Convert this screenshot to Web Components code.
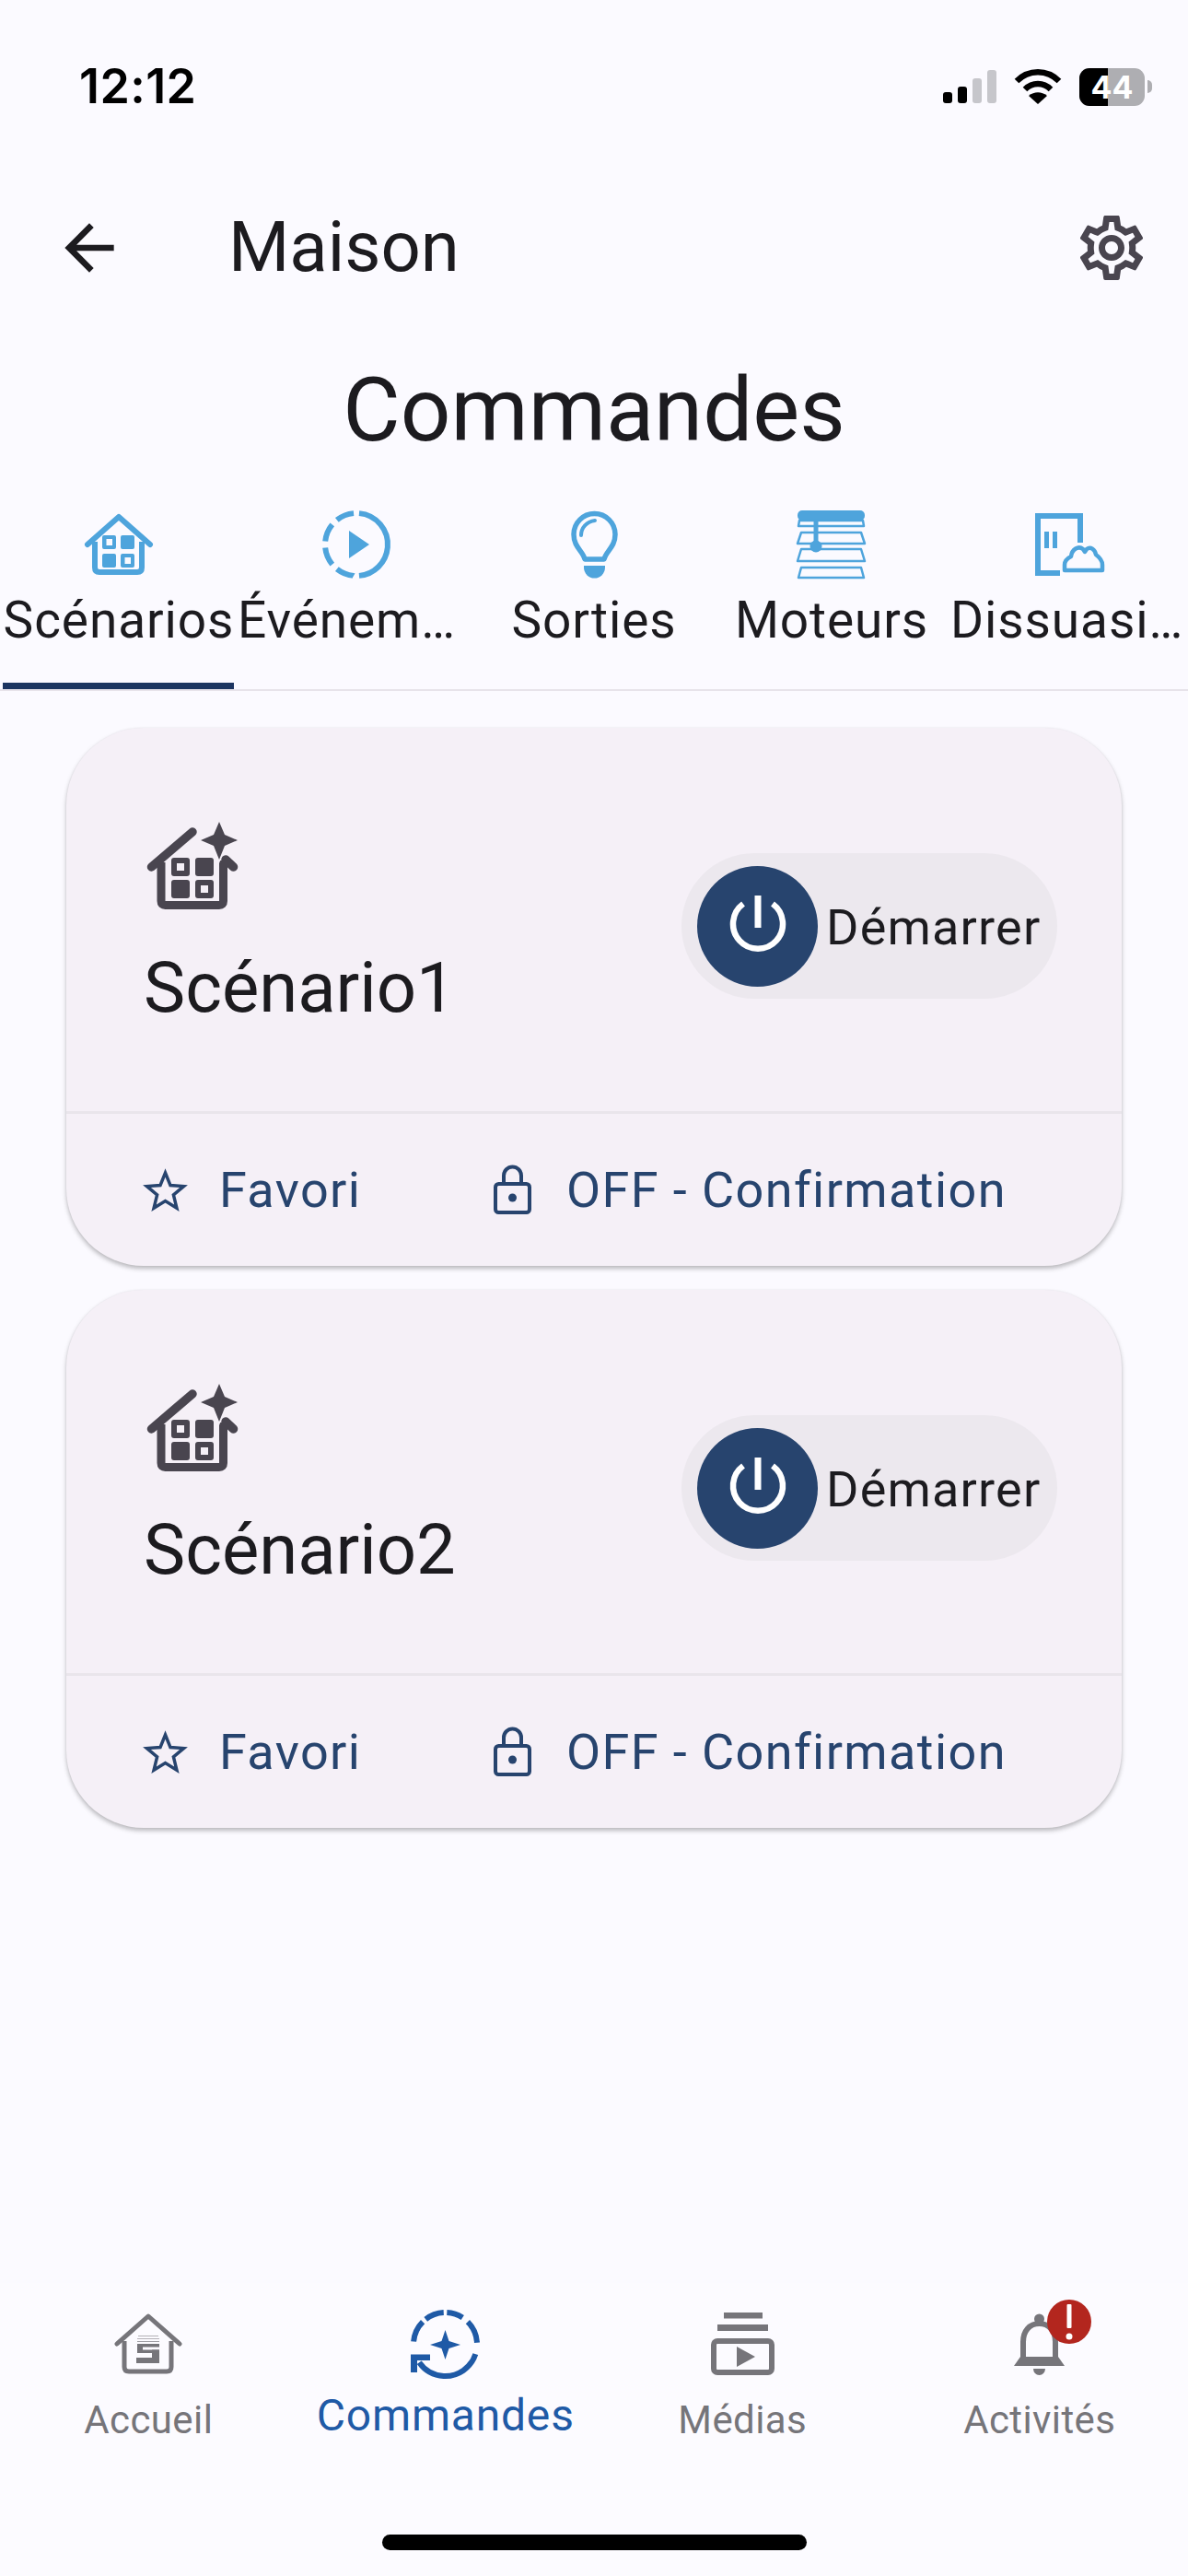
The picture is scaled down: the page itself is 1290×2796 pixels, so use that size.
<!DOCTYPE html>
<html lang="fr">
<head>
<meta charset="utf-8">
<title>Maison</title>
<style>
  html, body { margin: 0; padding: 0; }
  body { background: #fbfaff; font-family: Roboto, "Liberation Sans", sans-serif; color: #1c1b1f; }
</style>
</head>
<body>
<app-screen></app-screen>

<script>
// every icon is drawn on its own pixel box, taken from the 1290 wide reference
const ICONS = {
  signal: [58, 36, `
    <rect x="0" y="24" width="10" height="12" rx="3" fill="#000"/>
    <rect x="16" y="18" width="10" height="18" rx="3" fill="#000"/>
    <rect x="32" y="9" width="10" height="27" rx="3" fill="#c6c6cb"/>
    <rect x="48" y="0" width="10" height="36" rx="3" fill="#c6c6cb"/>`],
  wifi: [52, 37, `
    <path d="M3 12C16-1 36-1 49 12" fill="none" stroke="#000" stroke-width="6.500"/>
    <path d="M12 21C20 13 32 13 40 21" fill="none" stroke="#000" stroke-width="6.500"/>
    <path d="M16 28C22 23 30 23 36 28L26 37Z" fill="#000"/>`],
  back: [80, 80, `<path fill="currentColor" transform="scale(3.333)" d="M20 11H7.830l5.590-5.590L12 4l-8 8 8 8 1.410-1.410L7.830 13H20v-2z"/>`],
  gear: [84, 84, `<path fill="currentColor" transform="scale(3.500)" d="M19.430 12.980c.04-.32.07-.64.07-.98 0-.34-.03-.66-.07-.98l2.110-1.650c.19-.15.24-.42.12-.64l-2-3.460c-.09-.16-.26-.25-.44-.25-.06 0-.12.01-.17.03l-2.490 1c-.52-.4-1.080-.73-1.690-.98l-.38-2.650C14.460 2.180 14.250 2 14 2h-4c-.25 0-.46.18-.49.42l-.38 2.650c-.61.25-1.170.59-1.690.98l-2.490-1c-.06-.02-.12-.03-.18-.03-.17 0-.34.09-.43.25l-2 3.460c-.13.22-.07.49.12.64l2.110 1.650c-.04.32-.07.65-.07.98 0 .33.03.66.07.98l-2.110 1.650c-.19.15-.24.42-.12.64l2 3.460c.09.16.26.25.44.25.06 0 .12-.01.17-.03l2.490-1c.52.4 1.080.73 1.690.98l.38 2.650c.03.24.24.42.49.42h4c.25 0 .46-.18.49-.42l.38-2.650c.61-.25 1.170-.59 1.690-.98l2.490 1c.06.02.12.03.18.03.17 0 .34-.09.43-.25l2-3.460c.12-.22.07-.49-.12-.64l-2.110-1.650zm-1.980-1.710c.04.31.05.52.05.73 0 .21-.02.43-.05.73l-.14 1.130.89.7 1.080.84-.7 1.210-1.270-.51-1.040-.42-.9.68c-.43.32-.84.56-1.250.73l-1.060.43-.16 1.130-.2 1.350h-1.400l-.19-1.350-.16-1.130-1.060-.43c-.43-.18-.83-.41-1.230-.71l-.91-.7-1.060.43-1.270.51-.7-1.210 1.080-.84.89-.7-.14-1.130c-.03-.31-.05-.54-.05-.74s.02-.43.05-.73l.14-1.130-.89-.7-1.080-.84.7-1.210 1.270.51 1.040.42.9-.68c.43-.32.84-.56 1.250-.73l1.060-.43.16-1.130.2-1.350h1.390l.19 1.350.16 1.130 1.060.43c.43.18.83.41 1.230.71l.91.7 1.060-.43 1.270-.51.7 1.210-1.070.85-.89.7.14 1.130zM12 8c-2.210 0-4 1.790-4 4s1.790 4 4 4 4-1.790 4-4-1.790-4-4-4zm0 6c-1.100 0-2-.9-2-2s.9-2 2-2 2 .9 2 2-.9 2-2 2z"/>`],
  house: [74, 66, `
    <path d="M3 33 37 3 71 33" fill="none" stroke="currentColor" stroke-width="6" stroke-linecap="round" stroke-linejoin="round"/>
    <path d="M11 30V58q0 5 5 5H57q5 0 5-5V30" fill="none" stroke="currentColor" stroke-width="6"/>
    <path fill-rule="evenodd" fill="currentColor" d="M21 23H32q2 0 2 2V36q0 2-2 2H21q-2 0-2-2V25q0-2 2-2ZM23.500 27V34H30V27Z"/>
    <rect x="39" y="23" width="15" height="15" rx="2" fill="currentColor"/>
    <rect x="19" y="43" width="15" height="15" rx="2" fill="currentColor"/>
    <path fill-rule="evenodd" fill="currentColor" d="M41 43H52q2 0 2 2V56q0 2-2 2H41q-2 0-2-2V45q0-2 2-2ZM43.500 47V54H50V47Z"/>`],
  event: [74, 74, `
    <circle cx="37" cy="37" r="34" fill="none" stroke="currentColor" stroke-width="6" pathLength="360"
      stroke-dasharray="170 10 33.500 12 33.500 12 33.500 12 33.500 10" transform="rotate(-85 37 37)"/>
    <path d="M29 22 51 37 29 52Z" fill="currentColor"/>`],
  bulb: [51, 74, `
    <path d="M15 53C13 44 3 40 3 26A22.500 22.500 0 0 1 48 26C48 40 38 44 36 53Z" fill="none" stroke="currentColor" stroke-width="5.500" stroke-linejoin="round"/>
    <path d="M11 27C11 19 17 12 26 11" fill="none" stroke="currentColor" stroke-width="4" stroke-linecap="round"/>
    <path d="M14 60H37V62A11.500 11.500 0 0 1 14 62Z" fill="currentColor"/>`],
  blinds: [74, 74, `
    <rect x="0" y="0" width="73" height="11" rx="5" fill="currentColor"/>
    <g fill="none" stroke="currentColor" stroke-width="2.500" stroke-linejoin="round">
      <path d="M2 11H71L72 17H1Z"/>
      <path d="M4 24H69L73 36H0Z"/>
      <path d="M4 42H69L73 55H0Z"/>
      <path d="M4 62H69L72 73H1Z"/>
    </g>
    <path d="M20 10V39" stroke="currentColor" stroke-width="5"/>
    <circle cx="20" cy="39" r="6.500" fill="currentColor"/>`],
  shield: [75, 69, `
    <path d="M49 32V3H3V65H27" fill="none" stroke="currentColor" stroke-width="6"/>
    <rect x="10" y="20" width="5" height="18" fill="currentColor"/>
    <rect x="19" y="20" width="5" height="18" fill="currentColor"/>
    <path d="M32 62V56C32 52 35 49 39 47C40 39 47 35 52 39L54 42L56 39C60 36 65 39 66 45C70 48 73 52 73 56V62Z" fill="none" stroke="currentColor" stroke-width="4.500" stroke-linejoin="round"/>`],
  scene: [98, 96, `
    <path d="M4.500 49 49 11" fill="none" stroke="currentColor" stroke-width="9.500" stroke-linecap="round"/>
    <path d="M85 41 93.500 49" fill="none" stroke="currentColor" stroke-width="9.500" stroke-linecap="round"/>
    <path d="M15 44V86q0 4.500 4.500 4.500H78q4.500 0 4.500-4.500V42" fill="none" stroke="currentColor" stroke-width="9"/>
    <path fill-rule="evenodd" fill="currentColor" d="M29 39H43q3 0 3 3V56q0 3-3 3H29q-3 0-3-3V42q0-3 3-3ZM32 45V53H40V45Z"/>
    <rect x="52" y="39" width="20" height="20" rx="3" fill="currentColor"/>
    <rect x="26" y="63" width="20" height="20" rx="3" fill="currentColor"/>
    <path fill-rule="evenodd" fill="currentColor" d="M55 63H69q3 0 3 3V80q0 3-3 3H55q-3 0-3-3V66q0-3 3-3ZM58 69V77H66V69Z"/>
    <path d="M78 0 84 14 98 20 84 26 78 41 72 26 58 20 72 14Z" fill="currentColor" stroke="#f5f0f7" stroke-width="3" paint-order="stroke"/>`],
  star: [49, 46, `<path d="M24.500 4 30 17.600 44.500 18.600 33.400 28 36.900 42.200 24.500 34.500 12.100 42.200 15.600 28 4.500 18.600 19 17.600Z" fill="none" stroke="currentColor" stroke-width="3.500" stroke-linejoin="miter"/>`],
  lock: [41, 53, `
    <rect x="2" y="20" width="37" height="31" rx="3.500" fill="none" stroke="currentColor" stroke-width="4"/>
    <path d="M11 20V11a9.500 9.500 0 0 1 19 0V20" fill="none" stroke="currentColor" stroke-width="4"/>
    <circle cx="20.500" cy="35" r="4.500" fill="currentColor"/>`],
  power: [62, 66, `
    <path d="M15 9A27 27 0 1 0 47 9" fill="none" stroke="#fff" stroke-width="6.500"/>
    <rect x="27.500" y="0" width="7" height="35" fill="#fff"/>`],
  home: [74, 66, `
    <path d="M3 33 37 3 71 33" fill="none" stroke="currentColor" stroke-width="5" stroke-linecap="round" stroke-linejoin="round"/>
    <path d="M11 30V58q0 5 5 5H57q5 0 5-5V30" fill="none" stroke="currentColor" stroke-width="5"/>
    <g fill="currentColor">
      <rect x="26" y="24" width="22" height="1" opacity=".55"/>
      <rect x="25" y="27" width="24" height="1" opacity=".55"/>
      <rect x="25" y="30" width="24" height="1" opacity=".7"/>
      <rect x="25" y="33" width="24" height="3.500"/>
      <rect x="25" y="33" width="6" height="10"/>
      <rect x="25" y="39.500" width="24" height="3.500"/>
      <rect x="41" y="39.500" width="8" height="14.500"/>
      <rect x="24" y="48" width="25" height="6"/>
    </g>`],
  commands: [75, 75, `
    <circle cx="37.500" cy="37.500" r="34.500" fill="none" stroke="currentColor" stroke-width="6" pathLength="360"
      stroke-dasharray="30 12 42 21 127 40 40 7 35 6" transform="rotate(-87 37.500 37.500)"/>
    <path d="M37.500 22 41.500 34 54 38 41.500 42 37.500 54 33.500 42 21 38 33.500 34Z" fill="currentColor"/>
    <path d="M0 48.500H21V55H7V68H0Z" fill="currentColor"/>`],
  media: [69, 68, `
    <rect x="14" y="0" width="42" height="6.500" fill="currentColor"/>
    <rect x="7" y="13" width="55" height="7" fill="currentColor"/>
    <rect x="3" y="31" width="63" height="34" rx="4" fill="none" stroke="currentColor" stroke-width="6"/>
    <path d="M28 37 48 48 28 59Z" fill="currentColor"/>`],
  bell: [55, 67, `
    <circle cx="27.500" cy="6" r="5.500" fill="currentColor"/>
    <path d="M10 50V31C10 19 17 11 27.500 11C38 11 45 19 45 31V50" fill="none" stroke="currentColor" stroke-width="6"/>
    <path d="M0 57 7 47H48L55 57Z" fill="currentColor"/>
    <path d="M21 60H34A6.500 7 0 0 1 21 60Z" fill="currentColor"/>`],
  alert: [48, 48, `
    <rect x="21.500" y="5" width="5" height="26" rx="1" fill="#fff"/>
    <circle cx="24" cy="40" r="3.500" fill="#fff"/>`]
};

class AppElement extends HTMLElement {
  get html() { return ``; }
  get css() { return ``; }

  connectedCallback() {
    if (this.shadowRoot) return;
    this.attachShadow({ mode: 'open' });
    this.shadowRoot.innerHTML = `<style>${this.css}</style>${this.html}`;
  }

  static define(name) {
    customElements.define(name, this);
  }
}

class AppIcon extends AppElement {
  get css() { return `:host { display: block; line-height: 0; } svg { display: block; overflow: visible; }`; }
  get html() {
    const [w, h, body] = ICONS[this.getAttribute('name')];
    return `<svg xmlns="http://www.w3.org/2000/svg" width="${w}" height="${h}" viewBox="0 0 ${w} ${h}">${body}</svg>`;
  }
}

class StatusBar extends AppElement {
  get css() {
    return `
      :host { display: flex; align-items: center; height: 188px; padding: 0 39px 0 86px; box-sizing: border-box; }
      .time { font: 600 52px/60px Inter, "Liberation Sans", sans-serif; color: #000; letter-spacing: .4px; margin-right: auto; }
      .wifi { margin: 0 19px; }
      .battery { position: relative; display: flex; width: 71px; height: 41px; border-radius: 11px; overflow: hidden; background: #aeaeb2; }
      .level { width: 31px; background: #000; }
      .pct { position: absolute; inset: 0; text-align: center; font: 700 34px/41px Inter, "Liberation Sans", sans-serif; color: #fff; }
      .tip { width: 5px; height: 14px; margin-left: 3px; border-radius: 0 5px 5px 0; background: #aeaeb2; }
    `;
  }
  get html() {
    return `
      <span class="time">12:12</span>
      <app-icon name="signal"></app-icon>
      <app-icon class="wifi" name="wifi"></app-icon>
      <div class="battery"><div class="level"></div><span class="pct">44</span></div>
      <div class="tip"></div>
    `;
  }
}

class AppBar extends AppElement {
  get css() {
    return `
      :host { display: flex; align-items: center; height: 162px; padding: 0 41px 0 57px; box-sizing: border-box; }
      .back { color: #1c1b1f; }
      h1 { flex: 1; margin: 0 0 3px 111px; font: 400 76px/84px Roboto, sans-serif; color: #1c1b1f; }
      .gear { color: #49454f; }
    `;
  }
  get html() {
    return `
      <app-icon class="back" name="back"></app-icon>
      <h1><slot></slot></h1>
      <app-icon class="gear" name="gear"></app-icon>
    `;
  }
}

class PageTitle extends AppElement {
  get css() {
    return `
      :host { display: flex; align-items: center; justify-content: center; height: 190px; box-sizing: border-box;
        font: 400 96px/112px Roboto, sans-serif; color: #1c1b1f; }
    `;
  }
  get html() { return `<slot></slot>`; }
}

class TabBar extends AppElement {
  get css() {
    return `
      :host { display: grid; grid-template-columns: repeat(5, 258px); border-bottom: 2px solid #e7e3ea; }
    `;
  }
  get html() { return `<slot></slot>`; }
}

class TabItem extends AppElement {
  get css() {
    return `
      :host { display: flex; flex-direction: column; height: 208px; padding-top: 14px; box-sizing: border-box; min-width: 0; }
      .icon { display: flex; align-items: center; justify-content: center; height: 74px; color: #4ea4dc; }
      .label { margin-top: 15px; height: 60px; font: 400 55px/60px Roboto, sans-serif; letter-spacing: .9px; color: #1c1b1f;
        text-align: center; white-space: nowrap; }
      :host([clip]) .label { text-align: left; }
      .bar { margin: auto 4px 0 3px; height: 7px; }
      :host([active]) .bar { background: #1c3560; }
    `;
  }
  get html() {
    return `
      <div class="icon"><app-icon name="${this.getAttribute('icon')}"></app-icon></div>
      <div class="label"><slot></slot></div>
      <div class="bar"></div>
    `;
  }
}

class PowerButton extends AppElement {
  get css() {
    return `
      :host { display: flex; align-items: center; width: 408px; height: 158px; padding-left: 17px; box-sizing: border-box;
        border-radius: 79px; background: #ece8ee; }
      .disc { display: flex; align-items: center; justify-content: center; width: 131px; height: 131px; border-radius: 50%; background: #27446e; }
      .label { margin-left: 9px; padding-top: 3px; font: 400 54px/60px Roboto, sans-serif; letter-spacing: 1.200px; color: #1c1b1f; }
    `;
  }
  get html() {
    return `
      <div class="disc"><app-icon name="power"></app-icon></div>
      <span class="label"><slot></slot></span>
    `;
  }
}

class CardAction extends AppElement {
  get css() {
    return `
      :host { display: flex; align-items: center; color: #27446e; font: 400 54px/60px Roboto, sans-serif; letter-spacing: 1.400px; white-space: nowrap; }
      .icon { display: flex; justify-content: center; width: 49px; }
      .label { margin-left: 34px; }
    `;
  }
  get html() {
    return `
      <div class="icon"><app-icon name="${this.getAttribute('icon')}"></app-icon></div>
      <span class="label"><slot></slot></span>
    `;
  }
}

class ScenarioCard extends AppElement {
  get css() {
    return `
      :host { display: block; height: 584px; border-radius: 84px; background: #f5f0f7;
        box-shadow: 0 3px 5px rgba(0, 0, 0, .26), 0 0 2px rgba(0, 0, 0, .06); }
      .top { display: flex; justify-content: space-between; height: 419px; padding: 102px 70px 0 84px; box-sizing: border-box; border-bottom: 3px solid #e9e5eb; }
      .scene { color: #49454f; margin-left: 4px; }
      .name { margin-top: 42px; font: 400 76px/84px Roboto, sans-serif; color: #1c1b1f; }
      power-button { margin-top: 34px; }
      .actions { display: grid; grid-template-columns: 377px 1fr; align-items: center; height: 165px; padding-left: 83px; }
    `;
  }
  get html() {
    return `
      <div class="top">
        <div>
          <app-icon class="scene" name="scene"></app-icon>
          <div class="name"><slot></slot></div>
        </div>
        <power-button>Démarrer</power-button>
      </div>
      <div class="actions">
        <card-action icon="star">Favori</card-action>
        <card-action icon="lock">OFF - Confirmation</card-action>
      </div>
    `;
  }
}

class BottomNav extends AppElement {
  get css() {
    return `
      :host { display: grid; grid-template-columns: repeat(4, 322.5px); height: 318px; box-sizing: border-box; padding-top: 28px; background: #fcfbff; }
    `;
  }
  get html() { return `<slot></slot>`; }
}

class NavItem extends AppElement {
  get css() {
    return `
      :host { display: flex; flex-direction: column; align-items: center; color: #76757a; font: 400 42px/50px Roboto, sans-serif; letter-spacing: .4px; }
      :host([active]) { color: #1f5aa6; font-size: 48px; letter-spacing: .8px; }
      .icon { position: relative; display: flex; align-items: center; justify-content: center; height: 76px; }
      .label { margin-top: 20px; }
      :host([active]) .label { margin-top: 15px; }
      .badge { position: absolute; left: 36px; top: -10px; width: 48px; height: 48px; border-radius: 50%; background: #b3261e; }
    `;
  }
  get html() {
    const badge = this.hasAttribute('alert') ? `<div class="badge"><app-icon name="alert"></app-icon></div>` : ``;
    return `
      <div class="icon"><app-icon name="${this.getAttribute('icon')}"></app-icon>${badge}</div>
      <span class="label"><slot></slot></span>
    `;
  }
}

class HomeIndicator extends AppElement {
  get css() {
    return `
      :host { position: absolute; left: 415px; bottom: 28px; width: 461px; height: 17px; border-radius: 9px; background: #000; }
    `;
  }
}

class AppScreen extends AppElement {
  get css() {
    return `
      :host { position: relative; display: flex; flex-direction: column; height: 2796px; overflow: hidden; }
      .cards { display: flex; flex-direction: column; gap: 26px; padding: 40px 72px 0; }
      bottom-nav { margin-top: auto; }
    `;
  }
  get html() {
    return `
      <status-bar></status-bar>
      <app-bar>Maison</app-bar>
      <page-title>Commandes</page-title>
      <tab-bar>
        <tab-item icon="house" active>Scénarios</tab-item>
        <tab-item icon="event" clip>Événem…</tab-item>
        <tab-item icon="bulb">Sorties</tab-item>
        <tab-item icon="blinds">Moteurs</tab-item>
        <tab-item icon="shield" clip>Dissuasi…</tab-item>
      </tab-bar>
      <div class="cards">
        <scenario-card>Scénario1</scenario-card>
        <scenario-card>Scénario2</scenario-card>
      </div>
      <bottom-nav>
        <nav-item icon="home">Accueil</nav-item>
        <nav-item icon="commands" active>Commandes</nav-item>
        <nav-item icon="media">Médias</nav-item>
        <nav-item icon="bell" alert>Activités</nav-item>
      </bottom-nav>
      <home-indicator></home-indicator>
    `;
  }
}

AppIcon.define('app-icon');
StatusBar.define('status-bar');
AppBar.define('app-bar');
PageTitle.define('page-title');
TabBar.define('tab-bar');
TabItem.define('tab-item');
PowerButton.define('power-button');
CardAction.define('card-action');
ScenarioCard.define('scenario-card');
BottomNav.define('bottom-nav');
NavItem.define('nav-item');
HomeIndicator.define('home-indicator');
AppScreen.define('app-screen');
</script>
</body>
</html>
